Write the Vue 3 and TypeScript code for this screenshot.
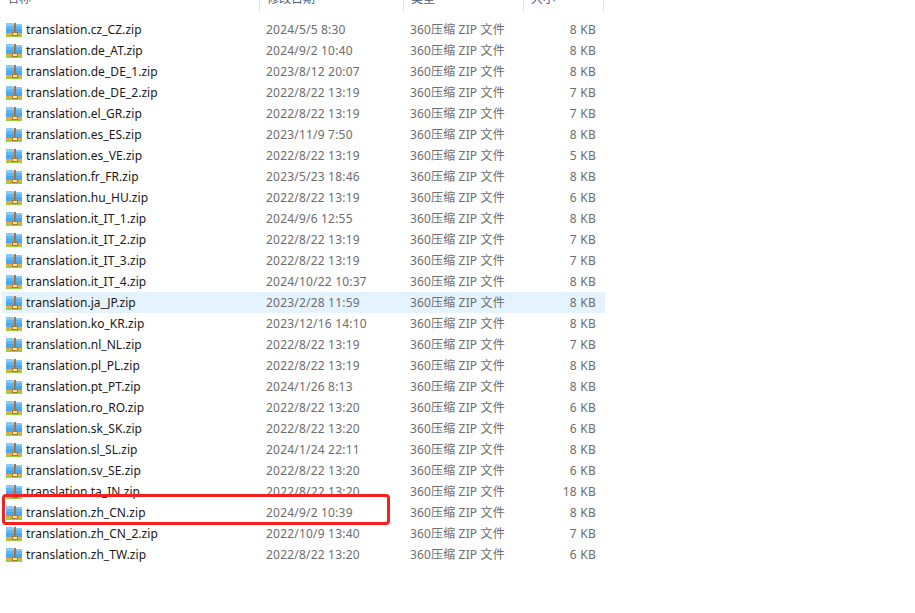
<script setup lang="ts">
interface FileRow { name: string; date: string; size: number }
const raw = `cz_CZ|2024/5/5 8:30|8
de_AT|2024/9/2 10:40|8
de_DE_1|2023/8/12 20:07|8
de_DE_2|2022/8/22 13:19|7
el_GR|2022/8/22 13:19|7
es_ES|2023/11/9 7:50|8
es_VE|2022/8/22 13:19|5
fr_FR|2023/5/23 18:46|8
hu_HU|2022/8/22 13:19|6
it_IT_1|2024/9/6 12:55|8
it_IT_2|2022/8/22 13:19|7
it_IT_3|2022/8/22 13:19|7
it_IT_4|2024/10/22 10:37|8
ja_JP|2023/2/28 11:59|8
ko_KR|2023/12/16 14:10|8
nl_NL|2022/8/22 13:19|7
pl_PL|2022/8/22 13:19|8
pt_PT|2024/1/26 8:13|8
ro_RO|2022/8/22 13:20|6
sk_SK|2022/8/22 13:20|6
sl_SL|2024/1/24 22:11|8
sv_SE|2022/8/22 13:20|6
ta_IN|2022/8/22 13:20|18
zh_CN|2024/9/2 10:39|8
zh_CN_2|2022/10/9 13:40|7
zh_TW|2022/8/22 13:20|6`
const rows: FileRow[] = raw.split('\n').map((l) => {
  const [n, date, size] = l.split('|')
  return { name: `translation.${n}.zip`, date, size: Number(size) }
})
const headers = ['名称', '修改日期', '类型', '大小']
</script>

<template>
  <div class="page">
    <div class="header">
      <div v-for="h in headers" :key="h" class="hcell"><span class="htext">{{ h }}</span></div>
    </div>
    <div class="list">
      <div v-for="r in rows" :key="r.name" class="row" :class="{ hover: r.name === 'translation.ja_JP.zip' }">
        <div class="name">
          <svg class="icon" width="16" height="16" viewBox="0 0 16 16" shape-rendering="crispEdges">
            <path d="M0 1h6l1 1h9v10H0z" fill="#4ba8ec" />
            <path d="M0 1h6l1 1h9v2H0z" fill="#86cbf8" />
            <path d="M0 4h16v3H0z" fill="#62b6f0" />
            <path d="M0 11h16v2H0z" fill="#f4a733" />
            <path d="M0 13h16v2H0z" fill="#93d045" />
            <path d="M8 1h2v9H8z" fill="#b0703a" />
            <path d="M6 10h6v4H6z" fill="#b5762e" />
            <path d="M7 11h4v2H7z" fill="#f9e2a6" />
          </svg>
          <span>{{ r.name }}</span>
        </div>
        <div class="date">{{ r.date }}</div>
        <div class="type">360压缩 ZIP 文件</div>
        <div class="size">{{ r.size }} KB</div>
      </div>
    </div>
    <div class="mark"></div>
  </div>
</template>

<style scoped>
.page {
  position: relative;
  width: 915px;
  height: 613px;
  overflow: hidden;
  background: #fff;
  font-family: "Noto Sans", "Noto Sans CJK SC", sans-serif;
  font-size: 12px;
}
.header {
  display: grid;
  grid-template-columns: 260px 144px 120px 80px;
  grid-template-rows: 12px;
  height: 12px;
  overflow: hidden;
  color: #4c607a;
}
.hcell {
  display: flex;
  align-items: flex-end;
  border-right: 1px solid #e5e5e5;
  padding-left: 7px;
  min-height: 0;
}
.htext { line-height: 16px; margin-bottom: 5px; flex: none; }
.list {
  margin-top: 7px;
  margin-left: 2px;
  width: 603px;
}
.row {
  display: grid;
  grid-template-columns: 258px 144px 120px 72px;
  height: 21px;
  align-items: center;
  line-height: 21px;
  color: #6d6d6d;
}
.row.hover { background: #e5f3ff; }
.name {
  display: flex;
  align-items: center;
  padding-left: 4px;
  color: #1a1a1a;
  gap: 4px;
  letter-spacing: 0.05px;
}
.icon { flex: none; }
.date { padding-left: 6px; letter-spacing: 0.2px; }
.type { padding-left: 6px; letter-spacing: 0.15px; }
.size { text-align: right; letter-spacing: 0.25px; }
.mark {
  position: absolute;
  left: 2px;
  top: 494px;
  width: 382px;
  height: 25px;
  border: 3px solid #f5211f;
  border-radius: 4px;
}
</style>
